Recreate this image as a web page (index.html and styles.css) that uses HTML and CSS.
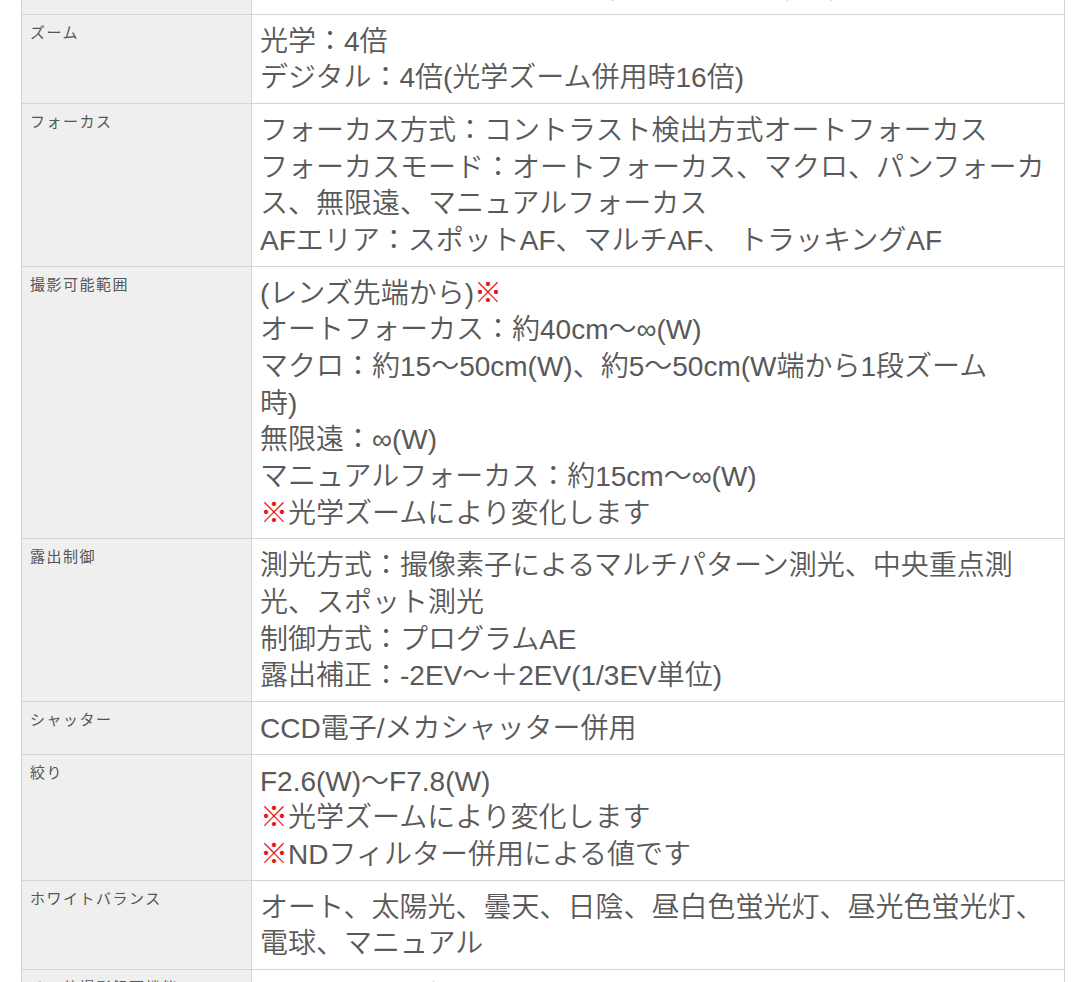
FILE: index.html
```html
<!DOCTYPE html>
<html lang="ja">
<head>
<meta charset="utf-8">
<title>仕様</title>
<link rel="stylesheet" href="styles.css">
</head>
<body>
<div class="viewport">
  <table class="spec">
    <tbody>
      <tr>
        <th>焦点距離</th>
        <td>f=5.0〜20.0mm 35mm判換算 28〜112mm相当</td>
      </tr>
      <tr>
        <th>ズーム</th>
        <td>光学：4倍<br>デジタル：4倍(光学ズーム併用時16倍)</td>
      </tr>
      <tr>
        <th>フォーカス</th>
        <td>フォーカス方式：コントラスト検出方式オートフォーカス<br>フォーカスモード：オートフォーカス、マクロ、パンフォーカス、無限遠、マニュアルフォーカス<br>AFエリア：スポットAF、マルチAF、 トラッキングAF</td>
      </tr>
      <tr>
        <th>撮影可能範囲</th>
        <td>(レンズ先端から)<span class="note">※</span><br>オートフォーカス：約40cm〜∞(W)<br>マクロ：約15〜50cm(W)、約5〜50cm(W端から1段ズーム<br>時)<br>無限遠：∞(W)<br>マニュアルフォーカス：約15cm〜∞(W)<br><span class="note">※</span>光学ズームにより変化します</td>
      </tr>
      <tr>
        <th>露出制御</th>
        <td>測光方式：撮像素子によるマルチパターン測光、中央重点測光、スポット測光<br>制御方式：プログラムAE<br>露出補正：-2EV〜＋2EV(1/3EV単位)</td>
      </tr>
      <tr>
        <th>シャッター</th>
        <td>CCD電子/メカシャッター併用</td>
      </tr>
      <tr>
        <th>絞り</th>
        <td>F2.6(W)〜F7.8(W)<br><span class="note">※</span>光学ズームにより変化します<br><span class="note">※</span>NDフィルター併用による値です</td>
      </tr>
      <tr>
        <th>ホワイトバランス</th>
        <td>オート、太陽光、曇天、日陰、昼白色蛍光灯、昼光色蛍光灯、電球、マニュアル</td>
      </tr>
      <tr>
        <th>その他撮影録画機能</th>
        <td>インターバル撮影、セルフタイマー</td>
      </tr>
    </tbody>
  </table>
</div>
</body>
</html>
```

FILE: styles.css
```css
html, body {
  margin: 0;
  padding: 0;
  background: #ffffff;
}

.viewport {
  height: 982px;
  overflow: hidden;
  padding-left: 21px;
}

.spec {
  margin-top: -39px;
  width: 1044px;
  border-collapse: collapse;
  border: 1px solid #d4d4d4;
  table-layout: fixed;
}

.spec th,
.spec td {
  border: 1px solid #d4d4d4;
  vertical-align: top;
  text-align: left;
}

.spec th {
  width: 213px;
  background: #efefef;
  color: #555555;
  font-family: "Noto Sans CJK JP", sans-serif;
  font-weight: normal;
  font-size: 15px;
  letter-spacing: 1.5px;
  line-height: 20px;
  padding: 7px 8px 8px 8px;
}

.spec td {
  background: #ffffff;
  color: #595959;
  font-family: "Liberation Sans", "Noto Sans CJK JP", sans-serif;
  font-weight: 350;
  font-size: 28px;
  line-height: 36.67px;
  padding: 9px 8px 6px 8px;
}

.note {
  color: #e8161d;
}
```
